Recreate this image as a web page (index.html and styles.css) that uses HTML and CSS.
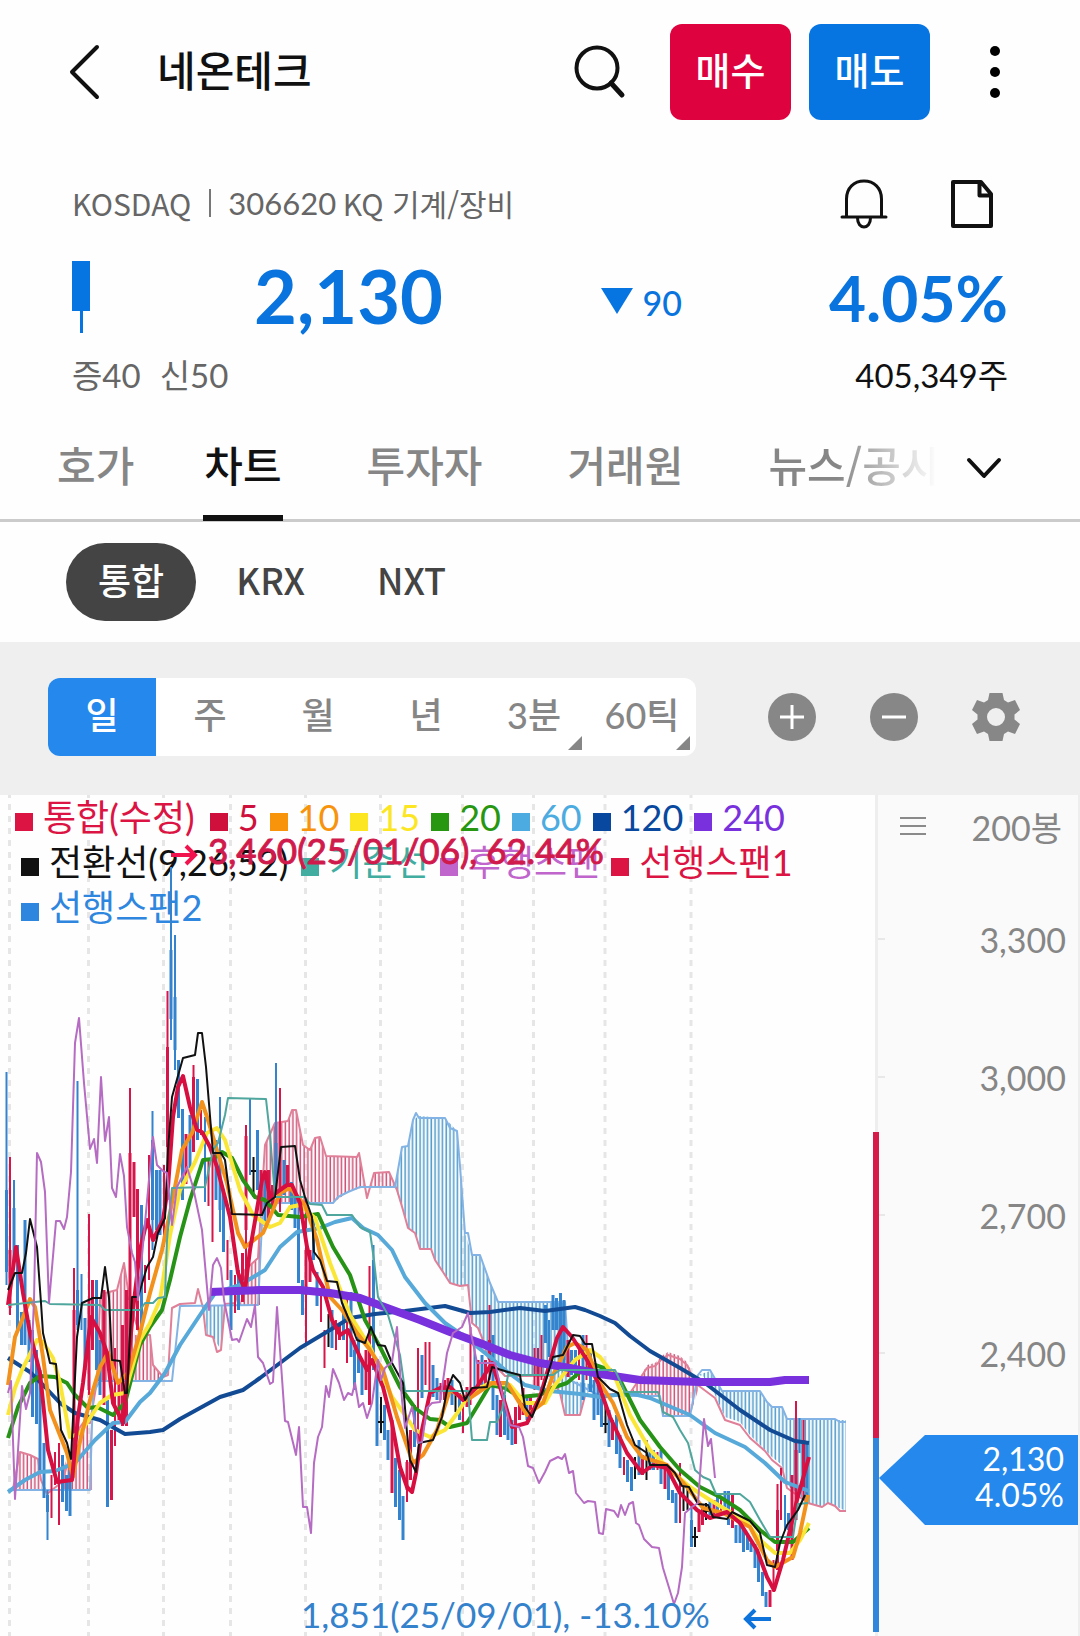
FILE: index.html
```html
<!DOCTYPE html>
<html lang="ko">
<head>
<meta charset="utf-8">
<meta name="viewport" content="width=device-width, initial-scale=1">
<title>네온테크</title>
<link rel="stylesheet" href="styles.css">
</head>
<body>
<header class="topbar">
  <button class="icon-btn back" aria-label="뒤로"><svg width="32" height="56" viewBox="0 0 32 56"><path d="M29 3L4 28l25 25" class="ink w4"/></svg></button>
  <h1 class="title">네온테크</h1>
  <button class="icon-btn search" aria-label="검색"><svg width="52" height="56" viewBox="0 0 52 56"><circle cx="23" cy="24" r="20.500" class="ink w4"/><path d="M37 39l11 12" class="ink w5"/></svg></button>
  <button class="trade buy">매수</button>
  <button class="trade sell">매도</button>
  <button class="icon-btn more" aria-label="더보기"><svg width="10" height="54" viewBox="0 0 10 54"><circle cx="5" cy="6" r="5"/><circle cx="5" cy="27" r="5"/><circle cx="5" cy="48" r="5"/></svg></button>
</header>

<main>
<section class="quote">
  <div class="meta">
    <p class="market">KOSDAQ<i class="bar"></i><span class="num">306620</span> KQ 기계/장비</p>
    <button class="icon-btn" aria-label="알림"><svg width="48" height="52" viewBox="0 0 48 52"><path d="M6.500 38V21C6.500 10 14 3 24 3s17.500 7 17.500 18v17M2 39h44M17.500 40c0 12 13 12 13 0" class="ink w3"/></svg></button>
    <button class="icon-btn note" aria-label="메모"><svg width="44" height="52" viewBox="0 0 44 52"><path d="M3 4h28l10 12v32H3zM29.500 5v12.500H41" class="ink w4"/></svg></button>
  </div>
  <div class="price-row">
    <svg class="mini" width="18" height="72" viewBox="0 0 18 72"><path d="M0 0h18v50H0zM8 50h3v22H8z"/></svg>
    <strong class="price">2,130</strong>
    <span class="diff"><svg width="32" height="26" viewBox="0 0 32 26"><path d="M0 0h32L16 26z"/></svg>90</span>
    <strong class="rate">4.05%</strong>
  </div>
  <div class="sub-row"><span class="margin"><span>증40</span><span>신50</span></span><span class="volume">405,349주</span></div>
</section>

<nav class="tabs">
  <a href="#" class="first">호가</a>
  <a href="#" class="on">차트</a>
  <a href="#">투자자</a>
  <a href="#">거래원</a>
  <a href="#" class="fade">뉴스/공시</a>
  <button class="icon-btn expand" aria-label="펼치기"><svg width="36" height="24" viewBox="0 0 36 24"><path d="M3 4l15 16L33 4" class="ink w4"/></svg></button>
</nav>

<div class="venues">
  <button class="chip on">통합</button>
  <button class="chip">KRX</button>
  <button class="chip">NXT</button>
</div>

<div class="toolbar">
  <div class="segments">
    <button class="on">일</button>
    <button>주</button>
    <button>월</button>
    <button>년</button>
    <button class="more-opt">3분</button>
    <button class="more-opt">60틱</button>
  </div>
  <div class="tools">
    <button class="icon-btn" aria-label="확대"><svg width="48" height="48" viewBox="0 0 48 48"><circle cx="24" cy="24" r="24" fill="#878787"/><path d="M12 24h24M24 12v24" stroke="#fff" stroke-width="3"/></svg></button>
    <button class="icon-btn" aria-label="축소"><svg width="48" height="48" viewBox="0 0 48 48"><circle cx="24" cy="24" r="24" fill="#878787"/><path d="M12 24h24" stroke="#fff" stroke-width="3"/></svg></button>
    <button class="icon-btn" aria-label="설정"><svg width="48" height="48" viewBox="0 0 48 48"><path fill="#878787" fill-rule="evenodd" d="M17.500 0h13l1.500 7 4 2.500 7-2.500 5 10-5.500 4.500v5L48 31l-5 10-7-2.500-4 2.500-1.500 7h-13L16 41l-4-2.500L5 41 0 31l5.500-4.500v-5L0 17 5 7l7 2.500L16 7zM24 15a9 9 0 100 18 9 9 0 000-18z"/></svg></button>
  </div>
</div>

<section class="chart">
  <div class="plot">
    <svg class="graph back-grid" viewBox="0 795 875 841" aria-hidden="true">
      <path class="grid" d="M9.500 795v841M88.500 795v841M163.500 795v841M230.500 795v841M305.500 795v841M380.500 795v841M462.500 795v841M533.500 795v841M605 795v841M691 795v841"/>
    </svg>
    <div class="legend">
      <div class="row">
        <span class="key c-main">통합(수정)</span><span class="key c-5">5</span><span class="key c-10">10</span><span class="key c-15">15</span><span class="key c-20">20</span><span class="key c-60">60</span><span class="key c-120">120</span><span class="key c-240">240</span>
      </div>
      <div class="row indent">
        <span class="key c-conv">전환선(9,26,52)</span><span class="key c-base">기준선</span><span class="key c-lag">후행스팬</span><span class="key c-s1">선행스팬1</span>
      </div>
      <div class="row indent"><span class="key c-s2">선행스팬2</span></div>
    </div>
    <svg class="graph" viewBox="0 795 875 841" role="img" aria-label="일봉 차트">
      <defs>
        <pattern id="hatchR" width="3.740" height="20" patternUnits="userSpaceOnUse"><path d="M1.200 0v20" stroke="#cf4f76" stroke-width="1.500"/></pattern>
        <pattern id="hatchB" width="3.740" height="20" patternUnits="userSpaceOnUse"><path d="M1.200 0v20" stroke="#559fcd" stroke-width="1.600"/></pattern>
      </defs>
      <path fill="url(#hatchR)" d="M13 1490L20 1452 30 1455 38 1459 42 1490ZM62 1490V1471L78 1430 90 1422 93 1490ZM97 1381L100 1300 105 1293 117 1290 124 1263 128 1290 135 1335 150 1335 153 1365 163 1377 166 1381ZM262 1203L265 1145 275 1123 288 1121 292 1110 296 1110 303 1145 310 1150 315 1138 320 1137 326 1156 357 1157 359 1153 364 1187 348 1192 333 1203ZM371 1187L374 1173 389 1172 395 1187ZM240 1305L245 1270 258 1258 262 1215 260 1305ZM630 1396L647 1365 655 1363 663 1355 668 1352 680 1356 687 1362 695 1380 700 1384 690 1416H663L660 1396Z"/>
      <path fill="url(#hatchB)" d="M395 1187L402 1147 408 1146 413 1120 419 1116 445 1118 457 1131 460 1166 465 1233 472 1255 480 1255 490 1283 498 1302 565 1302 568 1380 595 1385 585 1396 580 1415H565L560 1393 545 1375 500 1373 488 1355 483 1340 478 1328 472 1323 468 1285 460 1286 450 1283 435 1260 431 1249H420L415 1233 408 1228 403 1210ZM204 1306H226L221 1350 213 1337 207 1335ZM698 1375L710 1371 722 1392H760L767 1403 772 1408H782L787 1420H846V1511L835 1506 828 1503 822 1507 808 1503 787 1485 782 1465 772 1457 750 1435 740 1422 725 1417 715 1395 703 1376Z"/>
      <path class="ln span1" d="M13 1489l7-37 10 3 8 4 3 21 6 14 15-12 16-52 5-7h7l7-42 3-81 5-7 12-3 7-27 4 27 7 30 5 15h10l3 30 10 12 5-2 4-67 8-4 15-1 3-14 5 19 3 27 7 2 4 15 4-2 4-46 10-1 10-33 13-12 7-113 10-22 13-2 4-11h4l7 35 7 5 5-12 5-1 6 19 31 1 2-4 8 45 7-25 15-1 8 18 6 20 5 18 7 5 5 16h11l4 11 8 12 7 11 10 3 8-1 4 38 6 5 5 12 5 18 17 18h45l10 17 5 22h15l5-19 45-3 17-25 8-2 8-8 5-3 12 4 7 6 8 18 20 15 10 22 15 5 10 13 15 13 7 9 10 8 5 20 21 15 14 4 6-4 7 3 5 5h6"/>
      <path class="ln span2" d="M13 1490h77l3-97 7-12h72l8-75 78-1 5-102h70l5-6 10-5 12-5h35l7-40 6-1 5-26 3-7 3 5h26l5 10 7 3 3 35 5 67h3l4 22h8l10 28 8 19h67l5 78 30 16h60l3 20h27l8-41 4-5h8l12 21h38l7 11 5 5h10l5 12h48l5 3h6"/>

      <g class="candles blue">
        <path class="wick" d="M6.500 1072v213M14 1180v90M77.500 1081v249M81.500 1274v56M152.500 1111v139M171 867v173M175 935v135M205 1117v85M220 1097v135M250 1099v76M276 1063v132M298.500 1200v83M343.500 1300v40M373.500 1245v125M474.500 1340v50M549 1320v37M564 1300v70M691.500 1505v42M799.500 1418v35M785 1495v35M47.500 1490v50M354.500 1340v50M418 1370v30"/>
        <path class="body" d="M6.500 1190v82M14 1208v54M77.500 1290v35M152.500 1140v80M171 950v69M175 997v53M220 1150v60M276 1143v40M17.500 1245v85M21.500 1312v33M25 1220v125M29 1320v42M32.500 1330v87M36.500 1350v74M40 1370v100M44 1443v55M47.500 1495v17M62.500 1455v47M66.500 1475v36M70 1470v46M85 1318v52M96.500 1280v90M100 1340v55M107.500 1400v107M141.500 1205v125M156.500 1170v60M160 1170v65M178.500 1060v58M182.500 1109v91M190 1115v53M197.500 1079v61M216 1140v60M223.500 1190v62M231 1270v60M238.500 1270v40M257.500 1130v60M265 1178v48M284 1160v35M291.500 1182v28M295 1195v33M298.500 1215v68M302.500 1280v35M313.500 1215v45M317 1272v34M332 1310v38M343.500 1310v30M351 1292v65M354.500 1350v40M358.500 1335v38M362 1360v35M373.500 1260v110M377 1370v76M384.500 1405v35M388 1430v30M395.500 1458v49M399.500 1470v50M403 1496v44M414.500 1405v42M422 1355v43M433 1365v32M437 1378v22M452 1380v25M459.500 1393v27M482 1355v30M493 1335v75M497 1395v40M504.500 1395v40M508 1415v25M512 1420v25M527 1395v25M545.500 1305v38M553 1295v35M556.500 1298v32M560.500 1293v67M564 1300v60M571.500 1350v25M575.500 1350v28M583 1335v65M590.500 1350v42M594 1380v40M598 1385v30M601.500 1395v32M609 1410v37M616.500 1415v39M620 1435v33M627.500 1460v22M631.500 1467v24M639 1440v35M650 1449v21M653.500 1450v20M661 1450v34M668.500 1470v30M672.500 1490v13M676 1493v30M691.500 1520v27M710 1500v15M717.500 1495v20M725 1491v21M728.500 1491v34M736 1525v18M740 1523v20M743.500 1530v22M747.500 1535v15M751 1543v9M755 1544v24M758.500 1553v29M762.500 1572v24M766 1592v15M788.500 1513v17M807 1443v57"/>
      </g>
      <g class="candles red">
        <path class="wick" d="M10 1157v158M51.500 1475v43M55 1452v33M59 1443v82M74 1268v202M89 1214v181M115 1348v98M130 1088v272M145 1265v28M149 1155v125M164 1165v82M167.500 991v209M193.500 1065v87M201 1110v25M208.500 1160v46M212.500 1160v82M227.500 1240v40M235 1275v38M246 1125v165M280 1088v124M306 1200v145M321 1290v32M324.500 1330v38M336 1320v30M347 1298v65M369.500 1266v139M407 1460v42M418 1348v95M425.500 1342v43M429.500 1342v48M440.500 1383v17M463 1400v33M470.500 1327v78M489.500 1305v75M534.500 1348v42M538 1348v39M541.500 1335v45M579 1350v30M586.500 1335v45M624 1457v18M657.500 1452v18M680 1463v60M721 1497v18M773.500 1560v32M777.500 1484v86M781 1468v52M796 1401v119M803.500 1420v80"/>
        <path class="body" d="M10 1250v58M74 1310v150M89 1300v90M92.500 1280v70M104 1290v115M111.500 1430v70M119 1380v40M122.500 1325v101M126.500 1290v136M130 1153v147M134 1162v55M137.500 1189v141M167.500 1047v100M186 1134v50M193.500 1077v75M242.500 1253v49M246 1136v94M261 1170v45M268.500 1170v50M272.500 1185v25M287.500 1165v25M306 1250v45M310 1250v32M339.500 1325v15M366 1350v40M369.500 1330v75M392 1420v73M407 1462v28M410.500 1430v50M444.500 1380v20M448 1378v17M467 1387v20M478 1360v27M485.500 1360v25M489.500 1340v20M500.500 1400v37M515.500 1407v37M519.500 1395v25M523 1388v27M530.500 1395v22M538 1360v27M568 1340v37M612.500 1420v20M642.500 1455v20M665 1463v26M699 1512v20M702.500 1505v20M714 1500v15M732.500 1495v33M770 1590v17M777.500 1510v60M792 1475v85M796 1450v70M803.500 1440v50"/>
      </g>
      <path class="flat" d="M253.500 1157v40M328.500 1314v33M381 1397v36M455.500 1390v22M605.500 1405v28M635 1457v22M646.500 1440v40M683.500 1485v26M687.500 1487v23M695 1527v20M706 1503v17M251 1171h5M326 1331h5M378 1422h6M603 1424h5M692 1537h6M703 1511h6"/>

      <polyline class="ma ma120" points="8,1358 30,1372 45,1387 60,1403 75,1413 100,1420 125,1434 150,1432 163,1430 180,1419 200,1408 220,1397 243,1390 260,1378 280,1363 300,1348 335,1327 350,1318 375,1314 405,1311 445,1306 470,1313 490,1312 520,1308 545,1311 575,1307 585,1310 600,1316 615,1323 630,1336 650,1351 680,1368 705,1383 740,1410 770,1430 795,1441 809,1443"/>
      <polyline class="ma ma60" points="8,1492 25,1480 40,1472 55,1471 75,1463 95,1440 113,1423 125,1422 140,1402 150,1393 165,1373 180,1345 200,1315 215,1293 240,1285 265,1270 280,1247 297,1232 320,1228 335,1222 352,1218 363,1228 378,1235 392,1250 405,1277 425,1303 445,1323 465,1337 490,1357 505,1370 525,1385 550,1391 580,1394 600,1397 630,1393 650,1398 690,1415 715,1433 745,1447 765,1463 785,1482 809,1491"/>
      <polyline class="ma ma20" points="8,1438 18,1407 30,1383 40,1376 55,1377 67,1383 75,1395 88,1408 97,1407 113,1415 125,1403 140,1345 150,1327 162,1310 170,1280 180,1237 190,1200 203,1160 213,1159 222,1152 232,1158 243,1180 255,1197 265,1200 278,1215 300,1217 318,1214 333,1247 350,1275 365,1320 380,1347 400,1387 415,1408 430,1419 440,1420 450,1427 467,1423 478,1405 490,1385 505,1388 520,1397 540,1395 552,1388 567,1383 580,1372 595,1365 610,1370 620,1380 640,1420 660,1447 680,1470 700,1487 720,1497 740,1510 760,1530 775,1542 793,1542 809,1528"/>
      <polyline class="ma ma15" points="8,1415 15,1388 22,1370 37,1340 43,1342 53,1358 60,1383 70,1437 80,1433 100,1403 112,1395 125,1393 140,1340 150,1323 160,1300 170,1235 180,1190 195,1162 207,1133 217,1128 225,1140 240,1190 253,1215 270,1227 280,1223 290,1207 300,1205 315,1218 330,1263 350,1315 370,1347 392,1397 405,1415 415,1430 430,1437 445,1430 458,1412 470,1393 490,1383 510,1385 525,1403 545,1403 555,1385 575,1360 590,1350 600,1357 615,1377 630,1415 650,1450 670,1470 690,1487 710,1500 730,1512 745,1520 760,1540 775,1553 790,1553 800,1540 809,1523"/>
      <polyline class="ma ma10" points="8,1385 15,1337 22,1320 30,1299 35,1307 43,1357 50,1410 67,1453 73,1477 78,1450 90,1400 100,1367 108,1353 118,1383 128,1373 140,1333 150,1293 162,1250 170,1213 182,1150 192,1133 202,1102 207,1117 217,1150 227,1183 238,1233 245,1247 263,1233 270,1217 280,1193 290,1188 305,1205 317,1240 330,1297 342,1310 357,1333 370,1350 383,1370 397,1417 413,1463 423,1455 437,1430 450,1390 467,1400 492,1383 507,1383 527,1415 543,1403 553,1375 567,1347 575,1343 587,1350 600,1383 613,1403 627,1437 642,1457 667,1465 687,1487 703,1508 723,1513 750,1527 767,1560 775,1567 793,1557 800,1533 808,1495"/>
      <polyline class="ma ma5" points="8,1305 16,1247 23,1293 30,1333 40,1373 48,1450 57,1482 72,1480 78,1417 83,1383 91,1317 100,1333 107,1353 113,1403 123,1423 128,1367 133,1310 140,1250 147,1220 153,1240 163,1220 168,1187 173,1117 178,1087 183,1076 190,1107 197,1130 202,1132 210,1147 217,1167 230,1217 238,1273 245,1290 250,1250 262,1180 265,1172 270,1197 280,1190 287,1185 292,1185 300,1203 307,1247 313,1270 323,1287 332,1320 340,1335 348,1330 360,1357 367,1370 372,1360 383,1387 392,1423 400,1467 407,1487 412,1492 416,1473 422,1430 430,1393 440,1388 450,1387 463,1400 477,1387 492,1363 500,1387 512,1427 527,1423 540,1397 547,1373 557,1338 563,1327 572,1337 587,1360 598,1383 610,1417 627,1453 642,1473 653,1465 667,1468 680,1493 697,1510 710,1518 727,1512 740,1523 757,1550 767,1577 774,1590 783,1560 797,1500 809,1457"/>
      <polyline class="ma ma240" points="210,1292 260,1290 300,1290 330,1293 360,1298 390,1309 420,1320 450,1332 480,1343 510,1355 540,1363 570,1368 600,1374 640,1380 700,1382 770,1382 785,1380 809,1380"/>
      <polyline class="ln base" points="8,1305 35,1302 45,1301 50,1304 100,1305 105,1310 140,1310 145,1303 153,1303 158,1298 165,1297 167,1240 172,1188 205,1187 213,1150 218,1143 225,1115 228,1098 266,1099 270,1135 275,1197 305,1197 310,1204 322,1205 327,1215 352,1215 360,1227 370,1232 374,1260 378,1297 388,1315 400,1355 405,1391 468,1391 472,1440 487,1440 490,1422 497,1422 502,1410 508,1375 553,1375 560,1370 615,1370 625,1392 658,1392 663,1412 673,1417 680,1430 688,1443 695,1470 703,1477 710,1480 716,1494 740,1494 750,1502 760,1520 770,1537 793,1537 798,1504 808,1503"/>
      <polyline class="ln conv" points="8,1290 15,1273 22,1273 26,1253 30,1219 37,1247 41,1303 43,1333 50,1363 56,1364 61,1430 67,1443 71,1459 77,1337 82,1303 93,1298 101,1298 105,1267 109,1298 112,1360 120,1361 125,1393 127,1393 132,1297 138,1297 144,1277 147,1267 153,1257 158,1233 165,1218 168,1150 172,1097 183,1058 195,1055 198,1033 202,1033 206,1067 213,1153 221,1153 225,1160 232,1214 262,1215 267,1203 275,1197 281,1147 295,1146 300,1180 305,1197 312,1217 314,1252 320,1260 327,1281 337,1282 342,1303 352,1327 357,1340 365,1343 371,1327 378,1345 385,1346 392,1363 403,1383 407,1433 410,1460 416,1472 419,1443 433,1440 442,1417 447,1390 453,1375 460,1383 465,1400 472,1388 487,1387 492,1367 508,1372 520,1375 525,1407 532,1417 543,1390 553,1357 563,1355 573,1335 580,1336 585,1344 592,1344 598,1377 610,1389 618,1393 627,1425 635,1445 647,1453 650,1465 667,1465 675,1473 682,1486 689,1487 698,1504 708,1505 713,1517 727,1519 732,1512 750,1521 760,1533 767,1565 775,1567 780,1543 787,1525 798,1510 805,1495"/>
      <polyline class="ln lag" points="8,1393 11,1381 15,1499 22,1386 26,1409 30,1393 34,1300 37,1153 41,1162 45,1192 49,1303 56,1221 60,1221 64,1229 67,1217 71,1172 75,1043 79,1018 84,1083 90,1149 94,1139 97,1163 101,1077 105,1141 109,1117 112,1188 116,1197 120,1154 124,1176 127,1227 132,1253 135,1262 138,1300 148,1190 153,1137 157,1165 163,1171 167,1173 172,1225 177,1187 182,1177 187,1167 193,1187 202,1230 209,1310 213,1265 217,1258 221,1268 224,1300 232,1340 237,1339 239,1342 247,1319 251,1327 255,1305 258,1357 263,1363 270,1384 273,1382 277,1307 285,1421 288,1422 296,1455 299,1427 303,1507 307,1507 311,1533 314,1463 318,1437 322,1427 326,1386 329,1397 333,1369 339,1383 344,1400 348,1393 352,1395 355,1383 359,1407 363,1403 367,1418 372,1403 378,1360 381,1380 385,1368 392,1362 397,1327 402,1400 405,1428 412,1407 418,1443 422,1442 427,1408 432,1403 440,1402 447,1353 453,1333 462,1327 468,1313 471,1333 477,1363 495,1363 503,1397 510,1425 519,1427 523,1437 528,1466 533,1468 539,1483 545,1472 550,1461 558,1457 562,1459 565,1454 569,1473 573,1471 576,1493 584,1503 588,1501 595,1502 599,1533 603,1534 606,1509 614,1511 618,1517 621,1505 625,1515 629,1504 633,1502 636,1523 639,1525 644,1539 652,1547 659,1548 663,1568 674,1604 678,1593 682,1567 685,1513 692,1507 698,1503 704,1419 708,1446 711,1439 715,1478"/>

      <path class="arrow up" d="M171 855h24M186 846l9 9-9 9"/>
      <text class="mark up" x="208" y="864">3,460(25/01/06), 62.44%</text>
      <path class="arrow down" d="M771 1619h-25M755 1610l-9 9 9 9"/>
      <text class="mark down" x="301" y="1628">1,851(25/09/01), -13.10%</text>
    </svg>
  </div>
  <aside class="axis">
    <div class="axis-head">
      <button class="icon-btn" aria-label="목록"><svg width="26" height="20" viewBox="0 0 26 20"><path d="M0 2h26M0 10h26M0 18h26" stroke="#8a8a8a" stroke-width="2"/></svg></button>
      <span>200봉</span>
    </div>
    <div class="tick">3,300</div>
    <div class="tick">3,000</div>
    <div class="tick">2,700</div>
    <div class="tick">2,400</div>
    <div class="range"></div>
    <div class="flag"><svg width="46" height="90" viewBox="0 0 46 90"><path d="M46 0v90L0 43z" fill="#2588ec"/></svg><p>2,130<br>4.05%</p></div>
  </aside>
</section>
</main>
</body>
</html>
```
FILE: styles.css
```css
* { box-sizing: border-box; }

body {
  margin: 0;
  background: #fefefe;
  color: #111;
  font-family: "Noto Sans CJK KR", sans-serif;
  overflow-x: hidden;
}

h1, p { margin: 0; }
svg { display: block; }
a { color: inherit; text-decoration: none; }

button {
  margin: 0;
  padding: 0;
  border: 0;
  background: none;
  color: inherit;
  font: inherit;
}

.icon-btn { flex: none; }
.ink { fill: none; stroke: #111; stroke-linecap: round; stroke-linejoin: round; }
.w3 { stroke-width: 3; }
.w4 { stroke-width: 4; }
.w5 { stroke-width: 5; }

/* top bar */
.topbar {
  display: flex;
  align-items: center;
  height: 144px;
  padding: 0 80px 0 68px;
}
.title {
  flex: 1;
  margin-left: 57px;
  padding-bottom: 6px;
  font-size: 42px;
  font-weight: 500;
  line-height: 56px;
}
.search { margin-right: 44px; }
.trade {
  width: 121px;
  height: 96px;
  margin-right: 18px;
  padding-bottom: 8px;
  border-radius: 12px;
  color: #fff;
  font-size: 38px;
  font-weight: 500;
}
.buy { background: #de033f; }
.sell { background: #0675e2; }
.more { margin-left: 42px; }

/* quote summary */
.quote { padding: 24px 72px 0; }
.meta {
  display: flex;
  align-items: center;
  height: 72px;
  padding-right: 14px;
}
.market {
  display: flex;
  flex: 1;
  align-items: center;
  padding-bottom: 2px;
  color: #666;
  font-size: 30px;
  line-height: 40px;
  white-space: pre;
}
.num { margin-right: -2px; font-family: Lato, sans-serif; font-size: 31px; }
.bar {
  width: 2px;
  height: 28px;
  margin: 0 17px 0 18px;
  background: #777;
}
.note { margin-left: 62px; }
.price-row {
  display: flex;
  align-items: center;
  height: 112px;
  padding-top: 2px;
  color: #0a74de;
  font-family: Lato, sans-serif;
}
.price-row svg { fill: #0675e2; }
.price {
  flex: 1;
  margin-left: 164px;
  padding-bottom: 4px;
  font-size: 74px;
}
.diff {
  display: flex;
  align-items: center;
  gap: 10px;
  padding-top: 10px;
  font-size: 34px;
  font-weight: 500;
}
.diff svg { margin-bottom: 2px; }
.rate {
  width: 326px;
  font-size: 64px;
  text-align: right;
}
.sub-row {
  display: flex;
  justify-content: space-between;
  height: 50px;
  font-family: Lato, "Noto Sans CJK KR", sans-serif;
  font-size: 33px;
  line-height: 46px;
}
.margin { display: flex; gap: 19px; color: #666; }

/* section tabs */
.tabs {
  display: flex;
  align-items: center;
  gap: 83px;
  height: 120px;
  padding: 0 78px 0 56px;
  border-bottom: 3px solid #cbcbcb;
  color: #868686;
  font-size: 42px;
  font-weight: 500;
  line-height: 126px;
  white-space: nowrap;
}
.tabs a { height: 120px; padding: 0 1px; }
.tabs .first { margin-right: -15px; }
.tabs .on {
  border-bottom: 6px solid #111;
  color: #111;
}
.tabs .fade {
  flex: 1;
  overflow: hidden;
  background: linear-gradient(90deg, #868686 70px, #fefefe 170px);
  background-clip: text;
  -webkit-background-clip: text;
  color: transparent;
}
.tabs .expand { margin-left: -60px; padding-top: 14px; }

/* trading venues */
.venues {
  display: flex;
  align-items: center;
  height: 120px;
  padding-left: 66px;
}
.chip {
  height: 78px;
  padding: 0 32px 7px;
  margin-left: 8px;
  border-radius: 39px;
  color: #444;
  font-size: 36px;
  font-weight: 500;
}
.chip.on {
  margin-left: 0;
  background: #444;
  color: #fff;
}

/* period toolbar */
.toolbar {
  display: flex;
  align-items: center;
  justify-content: space-between;
  height: 153px;
  padding: 0 60px 4px 48px;
  background: #efefef;
}
.segments {
  display: grid;
  grid-template-columns: repeat(6, 1fr);
  flex: 0 1 648px;
  height: 78px;
  overflow: hidden;
  border-radius: 12px;
  background: #fff;
  color: #868686;
}
.segments button {
  position: relative;
  padding-bottom: 7px;
  font-family: Lato, "Noto Sans CJK KR", sans-serif;
  font-size: 36px;
  font-weight: 500;
}
.segments .on { background: #2588ec; color: #fff; }
.more-opt::after {
  content: "";
  position: absolute;
  right: 6px;
  bottom: 6px;
  border: 7px solid #868686;
  border-top-color: transparent;
  border-left-color: transparent;
}
.tools { display: flex; gap: 54px; }

/* chart */
.chart { display: flex; }
.plot { position: relative; flex: 1; min-width: 0; }
.legend {
  position: absolute;
  top: 0;
  left: 15px;
  font-family: Lato, "Noto Sans CJK KR", sans-serif;
  font-size: 36px;
  line-height: 45px;
  white-space: nowrap;
}
.row { display: flex; gap: 11px; height: 45px; }
.indent { padding-left: 6px; }
.key { display: flex; gap: 10px; }
.key::before {
  content: "";
  width: 18px;
  height: 18px;
  margin-top: 18px;
  background: currentColor;
}
.c-main { margin-right: 4px; }
.c-conv { margin-right: 2px; }
.c-main, .c-s1 { color: #dc1443; }
.c-5 { color: #d0103c; }
.c-10 { color: #f8930c; }
.c-15 { color: #fce622; }
.c-20 { color: #279610; }
.c-60 { color: #4cabe0; }
.c-120 { color: #08499f; }
.c-240 { color: #7831dc; }
.c-conv { color: #111; }
.c-base { color: #40ada0; }
.c-lag { color: #c065cc; }
.c-s2 { color: #2e86de; }

.graph { position: relative; width: 100%; }
.back-grid { position: absolute; top: 0; left: 0; }
.grid { fill: none; stroke: #e6e6e6; stroke-width: 3; stroke-dasharray: 6 6; stroke-dashoffset: 3; }
.candles { fill: none; }
.blue { stroke: #3483ce; }
.red { stroke: #d6164a; }
.wick { stroke-width: 2; }
.body { stroke-width: 3; }
.flat { fill: none; stroke: #111; stroke-width: 2; }
.ma { fill: none; stroke-width: 4; stroke-linejoin: round; }
.ma5 { stroke: #d60f40; }
.ma10 { stroke: #f2911c; }
.ma15 { stroke: #fae637; }
.ma20 { stroke: #279316; }
.ma60 { stroke: #56a9d8; }
.ma120 { stroke: #124b94; }
.ma240 { stroke: #7831dc; stroke-width: 8; }
.ln { fill: none; stroke-width: 2; stroke-linejoin: round; }
.span1 { stroke: #e07f98; }
.span2 { stroke: #83b3e4; }
.base { stroke: #4fa69d; }
.conv { stroke: #111; }
.lag { stroke: #b56cc2; }
.arrow { fill: none; stroke-width: 4; }
.mark { font-family: Lato, sans-serif; font-size: 35px; }
.arrow.up { stroke: #f0134d; }
.arrow.down { stroke: #0f73dc; }
.mark.up { fill: #d01a4c; stroke: #d01a4c; }
.mark.down { fill: #3481cc; }

/* price axis */
.axis {
  position: relative;
  flex: none;
  width: 205px;
  border-right: 2px solid #eee;
  border-left: 3px solid #eee;
  background: #fafafa;
  color: #868686;
  font-family: Lato, "Noto Sans CJK KR", sans-serif;
  font-size: 34px;
}
.axis-head {
  display: flex;
  align-items: center;
  justify-content: space-between;
  height: 75px;
  padding: 0 16px 13px 22px;
}
.tick {
  display: flex;
  align-items: center;
  justify-content: space-between;
  height: 138px;
  padding-right: 12px;
}
.tick::before {
  content: "";
  width: 7px;
  height: 2px;
  background: #e8e8e8;
}
.range {
  position: absolute;
  top: 337px;
  bottom: 4px;
  left: -5px;
  width: 6px;
  background: linear-gradient(#d61b4b 306px, #2f86da 306px);
}
.flag {
  position: absolute;
  top: 640px;
  right: 0;
  left: 1px;
  display: flex;
  height: 90px;
  color: #fff;
  font-size: 32px;
  line-height: 36px;
}
.flag p {
  flex: 1;
  padding: 6px 14px 0 0;
  background: #2588ec;
  text-align: right;
}
```
